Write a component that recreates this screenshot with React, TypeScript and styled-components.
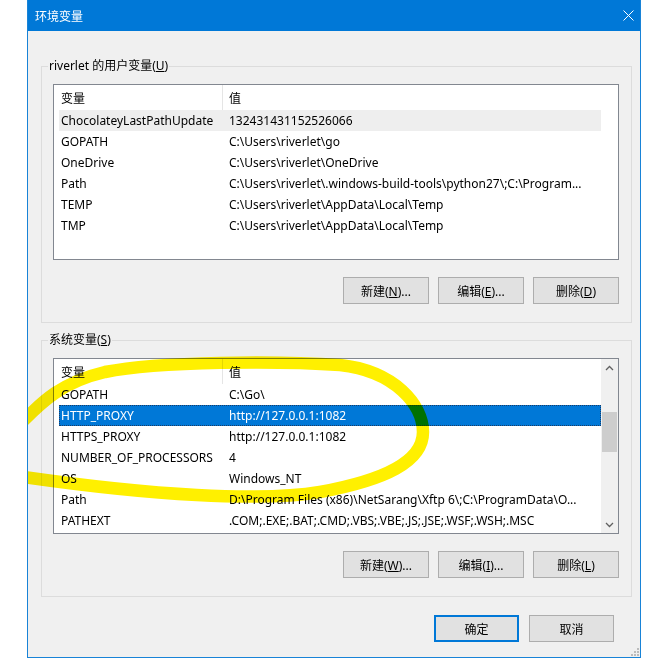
import React from 'react';
import styled, { createGlobalStyle } from 'styled-components';

const GlobalStyle = createGlobalStyle`
  html, body {
    margin: 0;
    padding: 0;
    background: #ffffff;
  }
  body {
    font-family: "Noto Sans", "Noto Sans CJK SC", sans-serif;
    font-size: 12px;
    color: #000;
  }
`;

const Page = styled.div`
  position: relative;
  width: 645px;
  height: 659px;
  padding-left: 27px;
  box-sizing: border-box;
  overflow: hidden;
`;

const Window = styled.div`
  position: relative;
  width: 614px;
  height: 658px;
  box-sizing: border-box;
  border: 1px solid #1883d7;
  border-top: none;
  background: #f0f0f0;
  display: flex;
  flex-direction: column;
`;

const TitleBar = styled.div`
  height: 31px;
  flex-shrink: 0;
  background: #0078d7;
  display: flex;
  align-items: center;
  justify-content: space-between;
  padding: 0 6px 0 7px;
  color: #ffffff;
`;

const Title = styled.span`
  font-size: 12px;
`;

const Content = styled.div`
  padding: 27px 8px 0 13px;
  display: flex;
  flex-direction: column;
`;

const Group = styled.fieldset<{ $gap?: number }>`
  margin: ${({ $gap }) => $gap ?? 0}px 0 0 0;
  padding: 10px 12px 18px 11px;
  border: 1px solid #dcdcdc;
  min-width: 0;
`;

const GroupLabel = styled.legend`
  padding: 0 1px;
  margin-left: -5px;
  font-size: 12px;
  line-height: 16px;
`;

const ListBox = styled.div`
  height: 176px;
  box-sizing: border-box;
  border: 1px solid #828790;
  background: #ffffff;
  display: flex;
  overflow: hidden;
`;

const ListBody = styled.div`
  flex: 1;
  min-width: 0;
  padding-left: 5px;
  display: flex;
  flex-direction: column;
`;

const HeaderRow = styled.div`
  height: 25px;
  flex-shrink: 0;
  display: flex;
  align-items: center;
`;

const HeaderName = styled.div`
  width: 164px;
  height: 100%;
  box-sizing: border-box;
  padding-left: 2px;
  display: flex;
  align-items: center;
  border-right: 1px solid #e5e5e5;
`;

const HeaderValue = styled.div`
  flex: 1;
  padding-left: 6px;
`;

const Row = styled.div<{ $state?: 'active' | 'inactive' }>`
  height: 21px;
  flex-shrink: 0;
  display: flex;
  align-items: center;
  white-space: nowrap;
  background: ${({ $state }) =>
    $state === 'active' ? '#0078d7' : $state === 'inactive' ? '#eeeeee' : 'transparent'};
  color: ${({ $state }) => ($state === 'active' ? '#ffffff' : '#000000')};
  outline: ${({ $state }) => ($state === 'active' ? '1px dotted #1c3d66' : 'none')};
  outline-offset: -1px;
`;

const NameCell = styled.div`
  width: 164px;
  flex-shrink: 0;
  padding-left: 2px;
  box-sizing: border-box;
  overflow: hidden;
`;

const ValueCell = styled.div`
  flex: 1;
  min-width: 0;
  padding-left: 6px;
  overflow: hidden;
`;

const ScrollTrack = styled.div<{ $hidden?: boolean }>`
  width: 17px;
  flex-shrink: 0;
  display: flex;
  flex-direction: column;
  background: ${({ $hidden }) => ($hidden ? '#ffffff' : '#f0f0f0')};
`;

const ScrollArrow = styled.div`
  height: 17px;
  display: flex;
  align-items: center;
  justify-content: center;
  color: #606060;
`;

const ScrollSpace = styled.div`
  flex: 1;
`;

const ScrollThumb = styled.div`
  margin: 36px 1px 0 1px;
  height: 40px;
  background: #cdcdcd;
`;

const ButtonRow = styled.div`
  display: flex;
  justify-content: flex-end;
  gap: 9px;
  margin-top: 17px;
`;

const Button = styled.button<{ $primary?: boolean }>`
  width: ${({ $primary }) => ($primary === undefined ? 86 : 85)}px;
  height: 27px;
  box-sizing: border-box;
  padding: 0;
  background: #e1e1e1;
  border: ${({ $primary }) => ($primary ? '2px solid #0078d7' : '1px solid #adadad')};
  font-family: "Noto Sans", "Noto Sans CJK SC", sans-serif;
  font-size: 12px;
  color: #000;
`;

const FooterRow = styled.div`
  display: flex;
  justify-content: flex-end;
  gap: 10px;
  margin-top: 18px;
  padding-right: 18px;
`;

const SizeGrip = styled.svg`
  position: absolute;
  right: 1px;
  bottom: 1px;
`;

const Annotation = styled.svg`
  position: absolute;
  left: 0;
  top: 0;
  pointer-events: none;
  mix-blend-mode: multiply;
`;

type Variable = { name: string; value: string; state?: 'active' | 'inactive' };

const userVars: Variable[] = [
  { name: 'ChocolateyLastPathUpdate', value: '132431431152526066', state: 'inactive' },
  { name: 'GOPATH', value: 'C:\\Users\\riverlet\\go' },
  { name: 'OneDrive', value: 'C:\\Users\\riverlet\\OneDrive' },
  { name: 'Path', value: 'C:\\Users\\riverlet\\.windows-build-tools\\python27\\;C:\\Program...' },
  { name: 'TEMP', value: 'C:\\Users\\riverlet\\AppData\\Local\\Temp' },
  { name: 'TMP', value: 'C:\\Users\\riverlet\\AppData\\Local\\Temp' },
];

const systemVars: Variable[] = [
  { name: 'GOPATH', value: 'C:\\Go\\' },
  { name: 'HTTP_PROXY', value: 'http://127.0.0.1:1082', state: 'active' },
  { name: 'HTTPS_PROXY', value: 'http://127.0.0.1:1082' },
  { name: 'NUMBER_OF_PROCESSORS', value: '4' },
  { name: 'OS', value: 'Windows_NT' },
  { name: 'Path', value: 'D:\\Program Files (x86)\\NetSarang\\Xftp 6\\;C:\\ProgramData\\O...' },
  { name: 'PATHEXT', value: '.COM;.EXE;.BAT;.CMD;.VBS;.VBE;.JS;.JSE;.WSF;.WSH;.MSC' },
];

const Chevron = ({ up }: { up?: boolean }) => (
  <svg width="9" height="6" viewBox="0 0 9 6">
    <path
      d={up ? 'M1 5 L4.5 1.5 L8 5' : 'M1 1 L4.5 4.5 L8 1'}
      fill="none"
      stroke="currentColor"
      strokeWidth="1.3"
    />
  </svg>
);

const VarList = ({ items, scroll }: { items: Variable[]; scroll?: boolean }) => (
  <ListBox>
    <ListBody>
      <HeaderRow>
        <HeaderName>变量</HeaderName>
        <HeaderValue>值</HeaderValue>
      </HeaderRow>
      {items.map((v) => (
        <Row key={v.name} $state={v.state}>
          <NameCell>{v.name}</NameCell>
          <ValueCell>{v.value}</ValueCell>
        </Row>
      ))}
    </ListBody>
    {scroll ? (
      <ScrollTrack>
        <ScrollArrow><Chevron up /></ScrollArrow>
        <ScrollSpace>
          <ScrollThumb />
        </ScrollSpace>
        <ScrollArrow><Chevron /></ScrollArrow>
      </ScrollTrack>
    ) : (
      <ScrollTrack $hidden />
    )}
  </ListBox>
);

const App: React.FC = () => {
  return <Page>
    <GlobalStyle />
    <Window>
      <TitleBar>
        <Title>环境变量</Title>
        <svg width="11" height="11" viewBox="0 0 11 11">
          <path d="M0.5 0.5 L10.5 10.5 M10.5 0.5 L0.5 10.5" stroke="#ffffff" strokeWidth="1" />
        </svg>
      </TitleBar>
      <Content>
        <Group>
          <GroupLabel>riverlet 的用户变量(<u>U</u>)</GroupLabel>
          <VarList items={userVars} />
          <ButtonRow>
            <Button>新建(<u>N</u>)...</Button>
            <Button>编辑(<u>E</u>)...</Button>
            <Button>删除(<u>D</u>)</Button>
          </ButtonRow>
        </Group>
        <Group $gap={9}>
          <GroupLabel>系统变量(<u>S</u>)</GroupLabel>
          <VarList items={systemVars} scroll />
          <ButtonRow>
            <Button>新建(<u>W</u>)...</Button>
            <Button>编辑(<u>I</u>)...</Button>
            <Button>删除(<u>L</u>)</Button>
          </ButtonRow>
        </Group>
        <FooterRow>
          <Button $primary>确定</Button>
          <Button $primary={false}>取消</Button>
        </FooterRow>
      </Content>
      <SizeGrip width="9" height="9" viewBox="0 0 9 9">
        <g fill="#bcbcbc">
          <rect x="7" y="1" width="2" height="2" />
          <rect x="4" y="4" width="2" height="2" />
          <rect x="7" y="4" width="2" height="2" />
          <rect x="1" y="7" width="2" height="2" />
          <rect x="4" y="7" width="2" height="2" />
          <rect x="7" y="7" width="2" height="2" />
        </g>
      </SizeGrip>
    </Window>
    <Annotation width="645" height="659" viewBox="0 0 645 659">
      <defs>
        <clipPath id="dialog-clip">
          <rect x="28" y="0" width="617" height="659" />
        </clipPath>
      </defs>
      <path
        clipPath="url(#dialog-clip)"
        d="M24 420 C 42 402, 62 382, 105 372 C 160 361, 280 361, 340 365 C 395 371, 423 405, 423 432 C 423 462, 385 480, 320 492 C 260 502, 150 495, 24 477"
        fill="none"
        stroke="#fff000"
        strokeWidth="12.5"
        strokeLinecap="round"
      />
    </Annotation>
  </Page>
};

export default App;
